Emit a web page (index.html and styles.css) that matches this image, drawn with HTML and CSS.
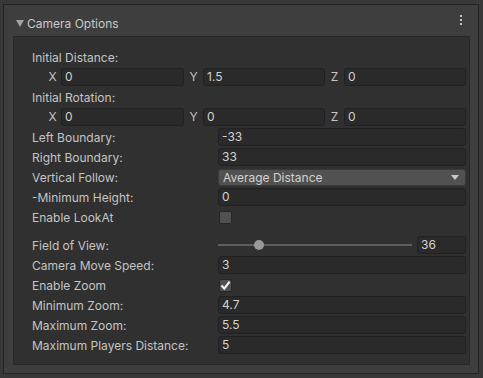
FILE: index.html
```html
<!DOCTYPE html>
<html lang="en">
<head>
    <meta charset="UTF-8">
    <title>Camera Options</title>
    <link rel="stylesheet" href="styles.css">
</head>
<body>
    <div class="panel">
        <div class="header">
            <span class="foldout"></span>
            <span class="title">Camera Options</span>
            <span class="kebab"><i></i><i></i><i></i></span>
        </div>
        <div class="content">
            <div class="row"><span class="label">Initial Distance:</span></div>
            <div class="vector">
                <span class="axis">X</span><span class="field">0</span>
                <span class="axis">Y</span><span class="field">1.5</span>
                <span class="axis">Z</span><span class="field">0</span>
            </div>
            <div class="row"><span class="label">Initial Rotation:</span></div>
            <div class="vector">
                <span class="axis">X</span><span class="field">0</span>
                <span class="axis">Y</span><span class="field">0</span>
                <span class="axis">Z</span><span class="field">0</span>
            </div>
            <div class="row"><span class="label">Left Boundary:</span><span class="field">-33</span></div>
            <div class="row"><span class="label">Right Boundary:</span><span class="field">33</span></div>
            <div class="row">
                <span class="label">Vertical Follow:</span>
                <span class="dropdown">Average Distance<span class="arrow"></span></span>
            </div>
            <div class="row"><span class="label">-Minimum Height:</span><span class="field">0</span></div>
            <div class="row"><span class="label">Enable LookAt</span><span><span class="checkbox"></span></span></div>

            <div class="row spaced">
                <span class="label">Field of View:</span>
                <span class="slider">
                    <span class="track"><span class="thumb" style="left: 21%"></span></span>
                    <span class="field small">36</span>
                </span>
            </div>
            <div class="row"><span class="label">Camera Move Speed:</span><span class="field">3</span></div>
            <div class="row">
                <span class="label">Enable Zoom</span>
                <span>
                    <span class="checkbox checked">
                        <svg width="11" height="11" viewBox="0 0 11 11"><path d="M1.5 5.5 L4.3 8.6 L9.6 1.6" fill="none" stroke="#f2f2f2" stroke-width="2.2"/></svg>
                    </span>
                </span>
            </div>
            <div class="row"><span class="label">Minimum Zoom:</span><span class="field">4.7</span></div>
            <div class="row"><span class="label">Maximum Zoom:</span><span class="field">5.5</span></div>
            <div class="row"><span class="label">Maximum Players Distance:</span><span class="field">5</span></div>
        </div>
    </div>
</body>
</html>
```

FILE: styles.css
```css
html, body {
    margin: 0;
    padding: 0;
}
body {
    background-color: #383838;
    width: 483px;
    height: 378px;
    font-family: Inter, "Noto Sans", sans-serif;
    font-size: 12px;
    color: #c4c4c4;
    overflow: hidden;
}
.panel {
    margin: 4px 4px 0 3px;
    height: 368px;
    border: 1px solid #242424;
    background-color: #3e3e3e;
    display: flex;
    flex-direction: column;
}
.header {
    height: 31px;
    display: flex;
    align-items: center;
    padding: 6px 0 0 12px;
    box-sizing: border-box;
}
.foldout {
    width: 0;
    height: 0;
    border-left: 4px solid transparent;
    border-right: 4px solid transparent;
    border-top: 7px solid #a3a3a3;
    margin-right: 3px;
}
.title {
    color: #c8c8c8;
    flex: 1;
}
.kebab {
    display: flex;
    flex-direction: column;
    gap: 2px;
    margin-right: 16px;
    margin-top: -7px;
}
.kebab i {
    display: block;
    width: 2px;
    height: 2px;
    background-color: #c2c2c2;
}
.content {
    flex: 1;
    margin: 0 8px 8px 9px;
    background-color: #303030;
    border: 1px solid #282828;
    padding: 11px 3px 0 18px;
    display: flex;
    flex-direction: column;
    gap: 2px;
}
.row {
    height: 18px;
    display: grid;
    grid-template-columns: 186px 1fr;
    align-items: center;
}
.row.spaced {
    margin-top: 8px;
}
.label {
    white-space: nowrap;
}
.field {
    height: 18px;
    box-sizing: border-box;
    background-color: #2a2a2a;
    border: 1px solid #212121;
    border-radius: 3px;
    padding-left: 3px;
    line-height: 16px;
    color: #d2d2d2;
}
.vector {
    height: 18px;
    margin-left: 12px;
    display: grid;
    grid-template-columns: 17px 123px 19px 122px 19px 1fr;
}
.axis {
    text-align: center;
    line-height: 18px;
}
.dropdown {
    height: 17px;
    box-sizing: border-box;
    background-color: #515151;
    border: 1px solid #3a3a3a;
    border-radius: 3px;
    padding-left: 4px;
    line-height: 15px;
    color: #d2d2d2;
    display: flex;
    align-items: center;
    justify-content: space-between;
}
.arrow {
    width: 0;
    height: 0;
    border-left: 4px solid transparent;
    border-right: 4px solid transparent;
    border-top: 5px solid #c8c8c8;
    margin-right: 6px;
}
.checkbox {
    display: flex;
    align-items: center;
    justify-content: center;
    width: 13px;
    height: 13px;
    box-sizing: border-box;
    margin-left: 1px;
    background-color: #505050;
    border: 1px solid #262626;
    border-radius: 2px;
}
.slider {
    display: flex;
    align-items: center;
    gap: 5px;
}
.track {
    position: relative;
    flex: 1;
    height: 2px;
    background-color: #5e5e5e;
}
.thumb {
    position: absolute;
    top: -4px;
    width: 10px;
    height: 10px;
    margin-left: -5px;
    border-radius: 50%;
    background-color: #999999;
}
.field.small {
    width: 49px;
}
```
